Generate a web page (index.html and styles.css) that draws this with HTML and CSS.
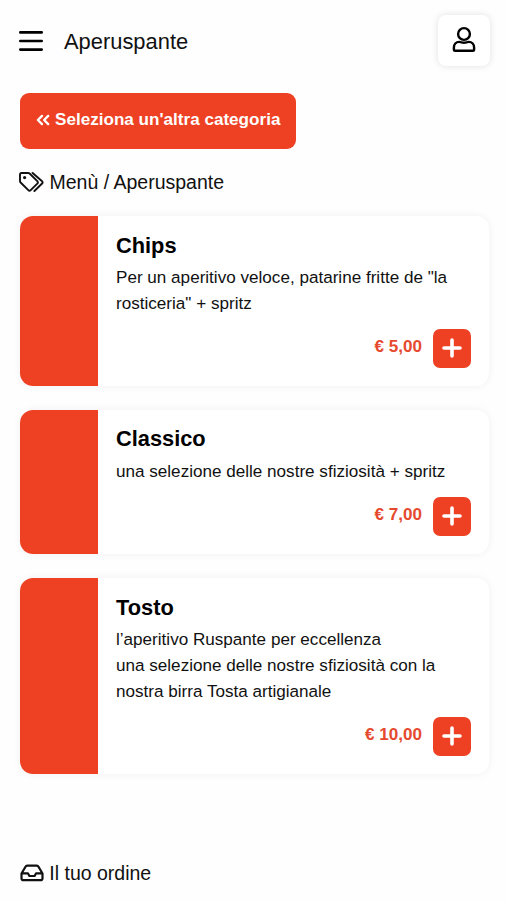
FILE: index.html
```html
<!DOCTYPE html>
<html lang="it">
<head>
<meta charset="utf-8">
<meta name="viewport" content="width=device-width, initial-scale=1">
<title>Aperuspante</title>
<link rel="stylesheet" href="styles.css">
</head>
<body>
<header class="topbar">
  <svg class="burger" viewBox="0 0 24 22" aria-hidden="true"><path d="M1.3 2.4h21.4M1.3 11h21.4M1.3 19.6h21.4"/></svg>
  <h1 class="page-title">Aperuspante</h1>
  <button class="account" aria-label="Account">
    <svg viewBox="0 0 24 28" aria-hidden="true"><circle cx="12" cy="8" r="5.9"/><path d="M7.200 15.900c1.800 0 2.800.800 4.800.800s3-.8 4.800-.8c3.200 0 5.300 2.600 5.300 5.700v1.800a1.300 1.300 0 0 1-1.300 1.300H3.200a1.300 1.300 0 0 1-1.300-1.300v-1.800c0-3.100 2.100-5.700 5.300-5.700z"/></svg>
  </button>
</header>
<main class="content">
  <a class="back">
    <svg viewBox="0 0 14 12" aria-hidden="true"><path d="M6 1.900 1.900 6 6 10.100M12.200 1.900 8.100 6l4.100 4.100"/></svg>
    <span>Seleziona un'altra categoria</span>
  </a>
  <h2 class="crumb">
    <svg class="tags" viewBox="0 0 25 20" aria-hidden="true"><path d="M1 2.300V9c0 .6.200 1.100.600 1.500l7.700 7.700a1.700 1.700 0 0 0 2.400 0l6.600-6.600a1.700 1.700 0 0 0 0-2.400l-7.700-7.700C10.200 1.200 9.700 1 9.200 1H2.300C1.600 1 1 1.600 1 2.300z"/><path d="M13.600 1l9.500 8.300c.7.700.7 1.500 0 2.200l-7.700 7.500"/><circle class="dot" cx="5.600" cy="5.600" r="1.600"/></svg>
    <span>Menù / Aperuspante</span>
  </h2>
  <section class="list">
    <article class="card">
      <div class="thumb"></div>
      <div class="body">
        <h3>Chips</h3>
        <p>Per un aperitivo veloce, patarine fritte de "la<br>rosticeria" + spritz</p>
        <div class="buy"><span class="price">€ 5,00</span><button class="add" aria-label="Aggiungi"><svg viewBox="0 0 20 20" aria-hidden="true"><path d="M10 2v16M2 10h16"/></svg></button></div>
      </div>
    </article>
    <article class="card">
      <div class="thumb"></div>
      <div class="body">
        <h3>Classico</h3>
        <p>una selezione delle nostre sfiziosità + spritz</p>
        <div class="buy"><span class="price">€ 7,00</span><button class="add" aria-label="Aggiungi"><svg viewBox="0 0 20 20" aria-hidden="true"><path d="M10 2v16M2 10h16"/></svg></button></div>
      </div>
    </article>
    <article class="card">
      <div class="thumb"></div>
      <div class="body">
        <h3>Tosto</h3>
        <p>l’aperitivo Ruspante per eccellenza<br>una selezione delle nostre sfiziosità con la<br>nostra birra Tosta artigianale</p>
        <div class="buy"><span class="price">€ 10,00</span><button class="add" aria-label="Aggiungi"><svg viewBox="0 0 20 20" aria-hidden="true"><path d="M10 2v16M2 10h16"/></svg></button></div>
      </div>
    </article>
  </section>
</main>
<footer class="order">
  <svg class="inbox" viewBox="0 0 24 18" aria-hidden="true"><path d="M1.500 9.500 5.500 2.700C5.900 2 6.500 1.700 7.200 1.700h9.600c.7 0 1.300.3 1.700 1l4 6.800v4.700c0 1.200-.8 2-2 2h-17c-1.200 0-2-.8-2-2zM1.900 9.300h6l1.500 2.700h5.200l1.500-2.700h6"/></svg>
  <span>Il tuo ordine</span>
</footer>
</body>
</html>
```
FILE: styles.css
```css
* { box-sizing: border-box; }
body {
  margin: 0;
  height: 900px;
  display: flex;
  flex-direction: column;
  overflow: hidden;
  background: #fefefe;
  color: #111;
  font-family: "Liberation Sans", Arial, sans-serif;
  font-size: 17.1px;
}
h1, h2, h3, p { margin: 0; font-weight: 400; }
svg { display: block; flex: none; fill: none; stroke: currentColor; stroke-linecap: round; stroke-linejoin: round; }
button { border: 0; padding: 0; display: grid; place-items: center; font: inherit; color: inherit; }

.topbar {
  display: flex;
  align-items: center;
  height: 81px;
  padding: 0 17.5px 0 19px;
}
.burger { width: 24px; height: 22px; stroke-width: 2.6; color: #000; }
.page-title { margin-left: 21px; font-size: 21.9px; line-height: 30px; padding-top: 2px; }
.account {
  width: 52px;
  height: 51px;
  margin-left: auto;
  padding-bottom: 1px;
  border-radius: 8px;
  background: #fff;
  color: #000;
  box-shadow: 0 0 7px rgba(0, 0, 0, .12);
}
.account svg { width: 24px; height: 28px; stroke-width: 2.4; }

.content { padding: 12px 18px 0 19.5px; }
.back {
  display: flex;
  align-items: center;
  width: 276.5px;
  height: 55.5px;
  padding: 0 0 1px 16px;
  border-radius: 9px;
  background: #ee4123;
  color: #fff;
  font-weight: 700;
  white-space: nowrap;
}
.back svg { width: 14px; height: 12px; margin-right: 5.5px; stroke-width: 2.3; }

.crumb {
  display: flex;
  align-items: center;
  height: 26px;
  margin-top: 20.5px;
  font-size: 19.5px;
  line-height: 26px;
}
.tags { width: 25px; height: 20px; margin: 0 5.5px 0 -.5px; stroke-width: 1.9; }
.tags .dot { fill: currentColor; stroke: none; }

.list { display: grid; gap: 24.2px; margin-top: 21px; }
.card {
  display: flex;
  overflow: hidden;
  border-radius: 13px;
  background: #fff;
  box-shadow: 0 0 8px rgba(0, 0, 0, .06);
}
.thumb { flex: none; width: 78.5px; background: #ee4123; }
.body { flex: 1; padding: 14.5px 18px 18.2px; }
h3 { font-size: 21.8px; font-weight: 700; line-height: 30px; color: #000; }
.body p { margin-top: 4.5px; line-height: 25.8px; white-space: nowrap; }
.buy {
  display: flex;
  align-items: center;
  justify-content: flex-end;
  gap: 10.5px;
  margin-top: 12px;
}
.price { padding-bottom: 3px; color: #e64a2e; font-weight: 700; }
.add { width: 38.5px; height: 39px; border-radius: 7px; background: #ee4123; color: #fff; }
.add svg { width: 20px; height: 20px; stroke-width: 3.6; }

.order {
  display: flex;
  align-items: center;
  margin-top: auto;
  height: 54px;
  padding: 0 20px;
  font-size: 19.5px;
}
.inbox { width: 24px; height: 18px; margin: 0 5.3px 1px 0; stroke-width: 2.2; }
```
